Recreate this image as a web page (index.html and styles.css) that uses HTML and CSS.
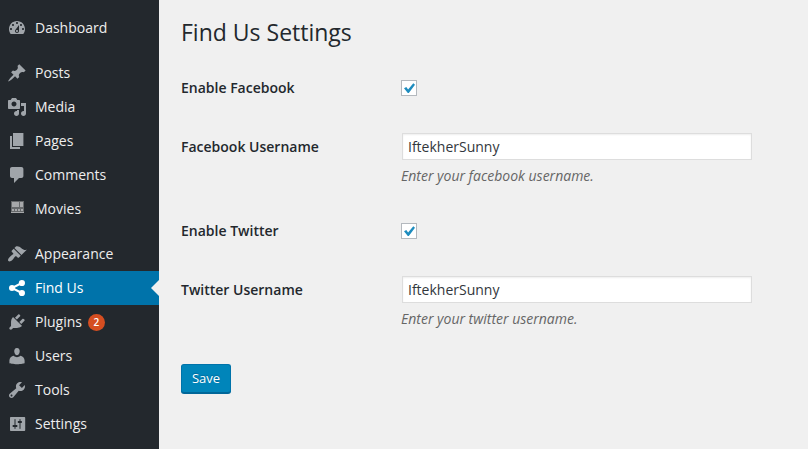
FILE: index.html
```html
<!DOCTYPE html>
<html lang="en">
<head>
<meta charset="utf-8">
<title>Find Us Settings</title>
<link rel="stylesheet" href="styles.css">
</head>
<body>
<nav class="menu">
  <a class="item"><svg class="icon" viewBox="0 0 20 20"><path d="M3.76 16h12.48c1.1-1.37 1.76-3.11 1.76-5 0-4.42-3.58-8-8-8s-8 3.58-8 8c0 1.89.66 3.63 1.76 5zM10 4c.55 0 1 .45 1 1s-.45 1-1 1-1-.45-1-1 .45-1 1-1zM6 6c.55 0 1 .45 1 1s-.45 1-1 1-1-.45-1-1 .45-1 1-1zm8 0c.55 0 1 .45 1 1s-.45 1-1 1-1-.45-1-1 .45-1 1-1zm-5.37 5.55L12 7v6c0 1.1-.9 2-2 2s-2-.9-2-2c0-.57.24-1.08.63-1.45zM4 10c.55 0 1 .45 1 1s-.45 1-1 1-1-.45-1-1 .45-1 1-1zm12 0c.55 0 1 .45 1 1s-.45 1-1 1-1-.45-1-1 .45-1 1-1zm-5 3c0-.55-.45-1-1-1s-1 .45-1 1 .45 1 1 1 1-.45 1-1z"/></svg><span class="name">Dashboard</span></a>
  <div class="separator"></div>
  <a class="item"><svg class="icon" viewBox="0 0 20 20"><path d="M10.44 3.02l1.82-1.82 6.36 6.35-1.83 1.82c-1.05-.68-2.48-.57-3.41.36l-.75.75c-.92.93-1.04 2.35-.35 3.41l-1.83 1.82-2.41-2.41-2.8 2.79c-.42.42-3.38 2.71-3.8 2.29s1.86-3.39 2.28-3.81l2.79-2.79L4.1 9.36l1.83-1.82c1.05.69 2.48.57 3.4-.36l.75-.75c.93-.92 1.05-2.35.36-3.41z"/></svg><span class="name">Posts</span></a>
  <a class="item"><svg class="icon" viewBox="0 0 20 20"><path d="M13 11V4c0-.55-.45-1-1-1h-1.67L9 1H5L3.67 3H2c-.55 0-1 .45-1 1v7c0 .55.45 1 1 1h10c.55 0 1-.45 1-1zM7 4.5c1.38 0 2.5 1.12 2.5 2.5S8.38 9.5 7 9.5 4.5 8.38 4.5 7 5.62 4.5 7 4.5zM14 6h5v10.5c0 1.38-1.12 2.5-2.5 2.5S14 17.88 14 16.5s1.12-2.5 2.5-2.5c.17 0 .34.02.5.05V9h-3V6zm-4 8.05V13h2v3.5c0 1.38-1.12 2.5-2.5 2.5S7 17.88 7 16.5 8.12 14 9.5 14c.17 0 .34.02.5.05z"/></svg><span class="name">Media</span></a>
  <a class="item"><svg class="icon" viewBox="0 0 20 20"><path d="M6 15V2h10.4v13H6zm-1 1h8v2H3V5h2v11z"/></svg><span class="name">Pages</span></a>
  <a class="item"><svg class="icon" viewBox="0 0 20 20"><path d="M5 2h9.4c1.1 0 2 .9 2 2v7c0 1.1-.9 2-2 2H12l-5 5v-5H5c-1.1 0-2-.9-2-2V4c0-1.1.9-2 2-2z"/></svg><span class="name">Comments</span></a>
  <a class="item"><svg class="icon" viewBox="0 0 20 20"><path class="film-frame" d="M4 2h13v12H4z"/><path class="film-cells" d="M5 3h7v5H5zM13 3h3v5h-3zM5 10h2v2H5zM8 10h2v2H8zM11 10h2v2h-2zM14 10h2v2h-2zM4 13h13v1H4z"/></svg><span class="name">Movies</span></a>
  <div class="separator"></div>
  <a class="item"><svg class="icon" viewBox="0 0 20 20"><path d="M14.48 11.06L7.41 3.99l1.5-1.5c.5-.56 2.3-.47 3.51.32 1.21.8 1.43 1.28 2.91 2.1 1.18.64 2.45 1.26 4.45.85zm-.71.71L6.7 4.7 4.93 6.47c-.39.39-.39 1.02 0 1.41l1.06 1.06c.39.39.39 1.03 0 1.42-.6.6-1.43 1.11-2.21 1.69-.35.26-.7.53-1.01.84C1.43 14.23.4 16.08 1.4 17.07c.99 1 2.84-.03 4.18-1.36.31-.31.58-.66.85-1.02.57-.78 1.08-1.61 1.69-2.21.39-.39 1.02-.39 1.41 0l1.06 1.06c.39.39 1.02.39 1.41 0z"/></svg><span class="name">Appearance</span></a>
  <a class="item current"><svg class="icon" viewBox="0 0 20 20"><circle cx="5" cy="10" r="3"/><circle cx="14.9" cy="5" r="3.1"/><circle cx="14.9" cy="15" r="3.1"/><path class="links" d="M14.8 5L5 10l9.8 5"/></svg><span class="name">Find Us</span></a>
  <a class="item"><svg class="icon" viewBox="0 0 20 20"><path d="M13.11 4.36L9.87 7.6 8 5.73l3.24-3.24c.35-.34 1.05-.2 1.56.32.52.51.66 1.21.31 1.55zm-8 1.77l.91-1.12 9.01 9.01-1.19.84c-.71.71-2.63 1.16-3.82 1.16H6.14L4.9 17.26c-.59.59-1.54.59-2.12 0-.59-.58-.59-1.53 0-2.12l1.24-1.24v-3.88c0-1.13.4-3.19 1.09-3.89zm7.26 3.97l3.24-3.24c.34-.35 1.04-.21 1.55.31.52.51.66 1.21.31 1.55l-3.24 3.25z"/></svg><span class="name">Plugins</span><span class="count">2</span></a>
  <a class="item"><svg class="icon" viewBox="0 0 20 20"><path d="M10 9.25c-2.27 0-2.73-3.44-2.73-3.44C7 4.02 7.82 2 9.97 2c2.16 0 2.98 2.02 2.71 3.81 0 0-.41 3.44-2.68 3.44zM6.8 9.8c.9 1 2 1.4 3.2 1.4s2.300-.4 3.200-1.400c2.400.2 4.400 2.200 4.400 4.700v2.700s-3.800 1-7.600 1-7.600-1-7.600-1v-2.700c0-2.500 2-4.500 4.400-4.700z"/></svg><span class="name">Users</span></a>
  <a class="item"><svg class="icon" viewBox="0 0 20 20"><path d="M16.68 9.77c-1.34 1.34-3.3 1.67-4.95.99l-5.41 6.52c-.99.99-2.59.99-3.58 0s-.99-2.59 0-3.57l6.52-5.42c-.68-1.65-.35-3.61.99-4.95 1.28-1.28 3.12-1.62 4.72-1.06l-2.89 2.89 2.82 2.82 2.86-2.87c.53 1.58.18 3.39-1.08 4.65zM3.81 16.21c.4.39 1.04.39 1.43 0 .4-.4.4-1.04 0-1.43-.39-.4-1.03-.4-1.43 0-.39.39-.39 1.03 0 1.43z"/></svg><span class="name">Tools</span></a>
  <a class="item"><svg class="icon" viewBox="0 0 20 20"><path d="M18.200 16V4c0-.55-.45-1-1-1H4c-.55 0-1 .45-1 1v12c0 .55.45 1 1 1h13.200c.55 0 1-.45 1-1zM8.500 11h1c.55 0 1 .45 1 1s-.45 1-1 1H8.500v1.500c0 .28-.22.5-.5.5s-.5-.22-.5-.5V13h-1c-.55 0-1-.45-1-1s.45-1 1-1h1V5.500c0-.28.22-.5.5-.5s.5.22.5.5V11zm5.500-2h-.500v5.500c0 .28-.22.5-.5.5s-.5-.22-.5-.5V9h-.800c-.55 0-1-.45-1-1s.45-1 1-1h.800V5.500c0-.28.22-.5.5-.5s.5.22.5.5V7h.500c.55 0 1 .45 1 1s-.45 1-1 1z"/></svg><span class="name">Settings</span></a>
</nav>
<main class="content">
  <h1 class="title">Find Us Settings</h1>
  <form class="form">
    <div class="row toggle">
      <label class="label" for="fb-on">Enable Facebook</label>
      <span class="checkbox" id="fb-on"><svg class="check" viewBox="0 0 14 14"><path d="M2 7.300L4.300 6 6.100 8.500 11.300 2.300 13 3.700 6.800 12H5.800z"/></svg></span>
    </div>
    <div class="row text">
      <label class="label" for="fb-name">Facebook Username</label>
      <div class="field"><input class="input" id="fb-name" type="text" value="IftekherSunny"><p class="hint">Enter your facebook username.</p></div>
    </div>
    <div class="row toggle">
      <label class="label" for="tw-on">Enable Twitter</label>
      <span class="checkbox" id="tw-on"><svg class="check" viewBox="0 0 14 14"><path d="M2 7.300L4.300 6 6.100 8.500 11.300 2.300 13 3.700 6.800 12H5.800z"/></svg></span>
    </div>
    <div class="row text">
      <label class="label" for="tw-name">Twitter Username</label>
      <div class="field"><input class="input" id="tw-name" type="text" value="IftekherSunny"><p class="hint">Enter your twitter username.</p></div>
    </div>
    <button class="save" type="button">Save</button>
  </form>
</main>
</body>
</html>
```
FILE: styles.css
```css
* { box-sizing: border-box; }
body {
  margin: 0;
  display: flex;
  height: 449px;
  overflow: hidden;
  background: #f0f0f0;
  color: #23282d;
  font: 14px/20px "Open Sans", sans-serif;
}
.menu {
  flex: none;
  width: 159px;
  padding-top: 11px;
  background: #23282d;
}
.item {
  position: relative;
  display: flex;
  align-items: center;
  height: 34px;
  padding-left: 7px;
  color: #eee;
}
.separator { height: 11px; }
.icon {
  flex: none;
  width: 20px;
  height: 20px;
  margin-right: 8px;
  fill: #a0a5aa;
}
.name { line-height: 18px; }
.film-frame { fill: #66696b; }
.film-cells { fill: #a6a8aa; }
.links { fill: none; stroke: #fff; stroke-width: 2; }
.current { background: #0073aa; color: #fff; }
.current .icon { fill: #fff; }
.current::after {
  content: "";
  position: absolute;
  right: 0;
  top: 9px;
  border: 8px solid transparent;
  border-left: 0;
  border-right-color: #f0f0f0;
}
.count {
  width: 17px;
  height: 17px;
  margin-left: 6px;
  border-radius: 50%;
  background: #d54e21;
  color: #fff;
  font-size: 10px;
  font-weight: 600;
  line-height: 17px;
  text-align: center;
}
.content { flex: 1; padding: 18px 0 0 22px; }
.title {
  margin: 0 0 25px;
  font-size: 23px;
  font-weight: 400;
  line-height: 29px;
}
.row {
  display: grid;
  grid-template-columns: 220px 351px;
}
.toggle { height: 61px; padding-top: 8px; }
.text { height: 82px; }
.label { font-weight: 600; line-height: 16px; }
.text .label { padding-top: 6px; }
.checkbox {
  width: 16px;
  height: 16px;
  border: 1px solid #b4b9be;
  background: #fff;
}
.check { display: block; width: 14px; height: 14px; fill: #1e8cbe; }
.input {
  display: block;
  width: 350px;
  height: 27px;
  margin-left: 1px;
  padding: 0 5px;
  border: 1px solid #ddd;
  background: #fff;
  box-shadow: inset 0 1px 2px rgba(0, 0, 0, .07);
  color: #32373c;
  font: 14px "Open Sans", sans-serif;
}
.hint {
  margin: 6px 0 0;
  color: #666;
  font-style: italic;
}
.save {
  display: block;
  width: 50px;
  height: 29px;
  margin-top: 6px;
  padding: 0 0 1px;
  border: 1px solid #0073aa;
  border-bottom-color: #006799;
  border-radius: 3px;
  background: #0085ba;
  box-shadow: 0 1px 0 #006799;
  color: #fff;
  font: 13px/26px "Open Sans", sans-serif;
  text-shadow: 0 -1px 1px #006799;
}
```
